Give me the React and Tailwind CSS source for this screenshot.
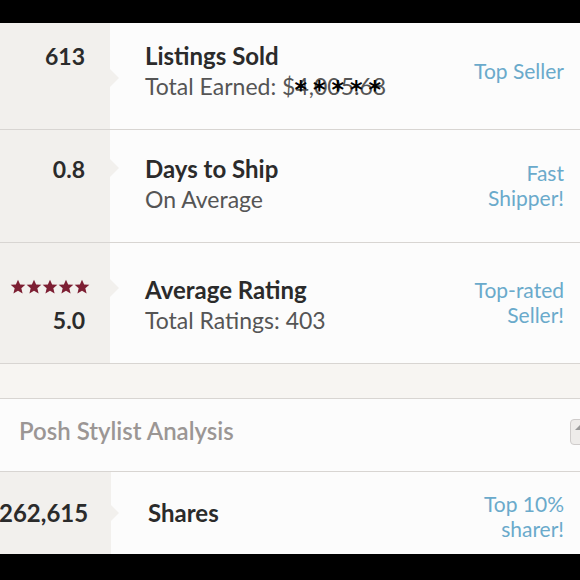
import React from "react";

const Star = () => (
  <svg width="16" height="16" viewBox="0 0 24 24" className="fill-[#7d1f33]">
    <path d="M12 1l3.2 7.2 7.8.6-6 5.1 1.9 7.7L12 17.5l-6.9 4.1 1.9-7.7-6-5.1 7.8-.6z" />
  </svg>
);

const Arrow = ({ top, color = "#f2f0ed" }) => (
  <div
    className="absolute left-[110px] w-0 h-0 border-y-[9px] border-y-transparent border-l-[9px]"
    style={{ top, borderLeftColor: color }}
  />
);

function Row({ left, title, sub, badge, height, pt, arrowTop, badgeMt }) {
  return (
    <div className="relative flex border-b border-[#d8d5d2] bg-[#fcfcfc]" style={{ height }}>
      <div className="w-[110px] shrink-0 bg-[#f2f0ed] flex flex-col items-end pr-[25px]" style={{ paddingTop: pt }}>
        {left}
      </div>
      <Arrow top={arrowTop} />
      <div className="flex-1 flex justify-between pl-[35px] pr-[16px]" style={{ paddingTop: pt }}>
        <div>
          <div className="text-[24px] font-bold text-[#2b2b2b] leading-[30px]">{title}</div>
          {sub && <div className="text-[23px] text-[#555] leading-[30px]">{sub}</div>}
        </div>
        <div className="text-right text-[21px] text-[#6aaacb] leading-[25px]" style={{ marginTop: badgeMt }}>
          {badge}
        </div>
      </div>
    </div>
  );
}

export default function App() {
  return (
    <div className="w-[580px] h-[580px] overflow-hidden bg-black font-['Lato','Open_Sans',sans-serif]">
      <div className="h-[23px] bg-black" />
      <Row
        height={107}
        pt={18}
        arrowTop={46}
        badgeMt={17}
        left={<div className="text-[23px] font-bold text-[#2b2b2b] leading-[30px]">613</div>}
        title="Listings Sold"
        sub={
          <span>
            Total Earned: $
            <span className="relative">
              4,005.68
              <span className="absolute left-[-1px] top-[3px] text-black font-bold tracking-[6px] text-[24px] leading-[30px] whitespace-nowrap font-['DejaVu_Sans',sans-serif]">*****</span>
            </span>
          </span>
        }
        badge={<div>Top Seller</div>}
      />
      <Row
        height={113}
        pt={24}
        arrowTop={29}
        badgeMt={6}
        left={<div className="text-[23px] font-bold text-[#2b2b2b] leading-[30px]">0.8</div>}
        title="Days to Ship"
        sub="On Average"
        badge={
          <>
            <div>Fast</div>
            <div>Shipper!</div>
          </>
        }
      />
      <Row
        height={121}
        pt={32}
        arrowTop={36}
        badgeMt={2}
        left={
          <>
            <div className="flex gap-0 mr-[-5px] mt-[4px]">
              <Star />
              <Star />
              <Star />
              <Star />
              <Star />
            </div>
            <div className="text-[23px] font-bold text-[#2b2b2b] leading-[30px] mt-[10px]">5.0</div>
          </>
        }
        title="Average Rating"
        sub="Total Ratings: 403"
        badge={
          <>
            <div>Top-rated</div>
            <div>Seller!</div>
          </>
        }
      />
      <div className="h-[35px] bg-[#f7f5f2] border-b border-[#d8d5d2]" />
      <div className="relative h-[73px] bg-[#fcfcfc] border-b border-[#d8d5d2] flex items-center pl-[19px] pb-[8px]">
        <div className="text-[24px] font-semibold text-[#9b9694]">Posh Stylist Analysis</div>
        <div className="absolute left-[570px] top-[20px] w-[24px] h-[26px] rounded-[4px] border border-[#cfcccb] bg-[#eeecea] flex items-start justify-start pl-[4px] pt-[5px]">
          <div className="w-0 h-0 border-x-[5px] border-x-transparent border-b-[5px] border-b-[#9a9a9a]" />
        </div>
      </div>
      <div className="relative flex h-[82px] bg-[#fcfcfc]">
        <div className="w-[111px] shrink-0 bg-[#f2f0ed] flex items-center">
          <div className="text-[24px] font-bold text-[#2b2b2b] leading-[30px] ml-[-1px]">262,615</div>
        </div>
        <Arrow top={32} />
        <div className="flex-1 flex justify-between items-center pl-[37px] pr-[16px]">
          <div className="text-[24px] font-bold text-[#2b2b2b]">Shares</div>
          <div className="text-right text-[21px] text-[#6aaacb] leading-[25px] mt-[6px]">
            <div>Top 10%</div>
            <div>sharer!</div>
          </div>
        </div>
      </div>
      <div className="h-[25px] bg-black" />
    </div>
  );
}
